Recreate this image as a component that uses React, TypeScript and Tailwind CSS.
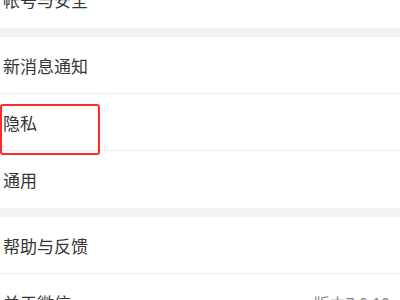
import React from 'react';

const font = { fontFamily: '"Noto Sans CJK SC", "Noto Sans", sans-serif' };

const Row: React.FC<{ label: string; right?: string; divider?: boolean; className?: string }> = ({ label, right, divider, className }) => (
  <div className={`flex h-[57px] items-center justify-between bg-white pl-[3px] pr-[10px] ${divider ? 'border-b border-[#ededed]' : ''} ${className ?? ''}`}>
    <span className="text-[17px] leading-none text-[#353535]">{label}</span>
    {right && <span className="text-[16px] leading-none text-[#888888]">{right}</span>}
  </div>
);

export default function App() {
  return (
    <div className="relative h-[300px] w-[400px] overflow-hidden bg-white" style={font}>
      <div className="-mt-[29px]">
        <Row label="帐号与安全" />
      </div>
      <div className="h-[9px] bg-[#f2f2f2]" />
      <Row label="新消息通知" divider />
      <Row label="隐私" divider />
      <Row label="通用" />
      <div className="h-[9px] bg-[#f2f2f2]" />
      <Row label="帮助与反馈" divider />
      <Row label="关于微信" right="版本7.0.10" />
      <div className="absolute left-0 top-[104px] h-[51px] w-[100px] rounded-[3px] border-2 border-[#ff2a2a]" />
    </div>
  );
}
